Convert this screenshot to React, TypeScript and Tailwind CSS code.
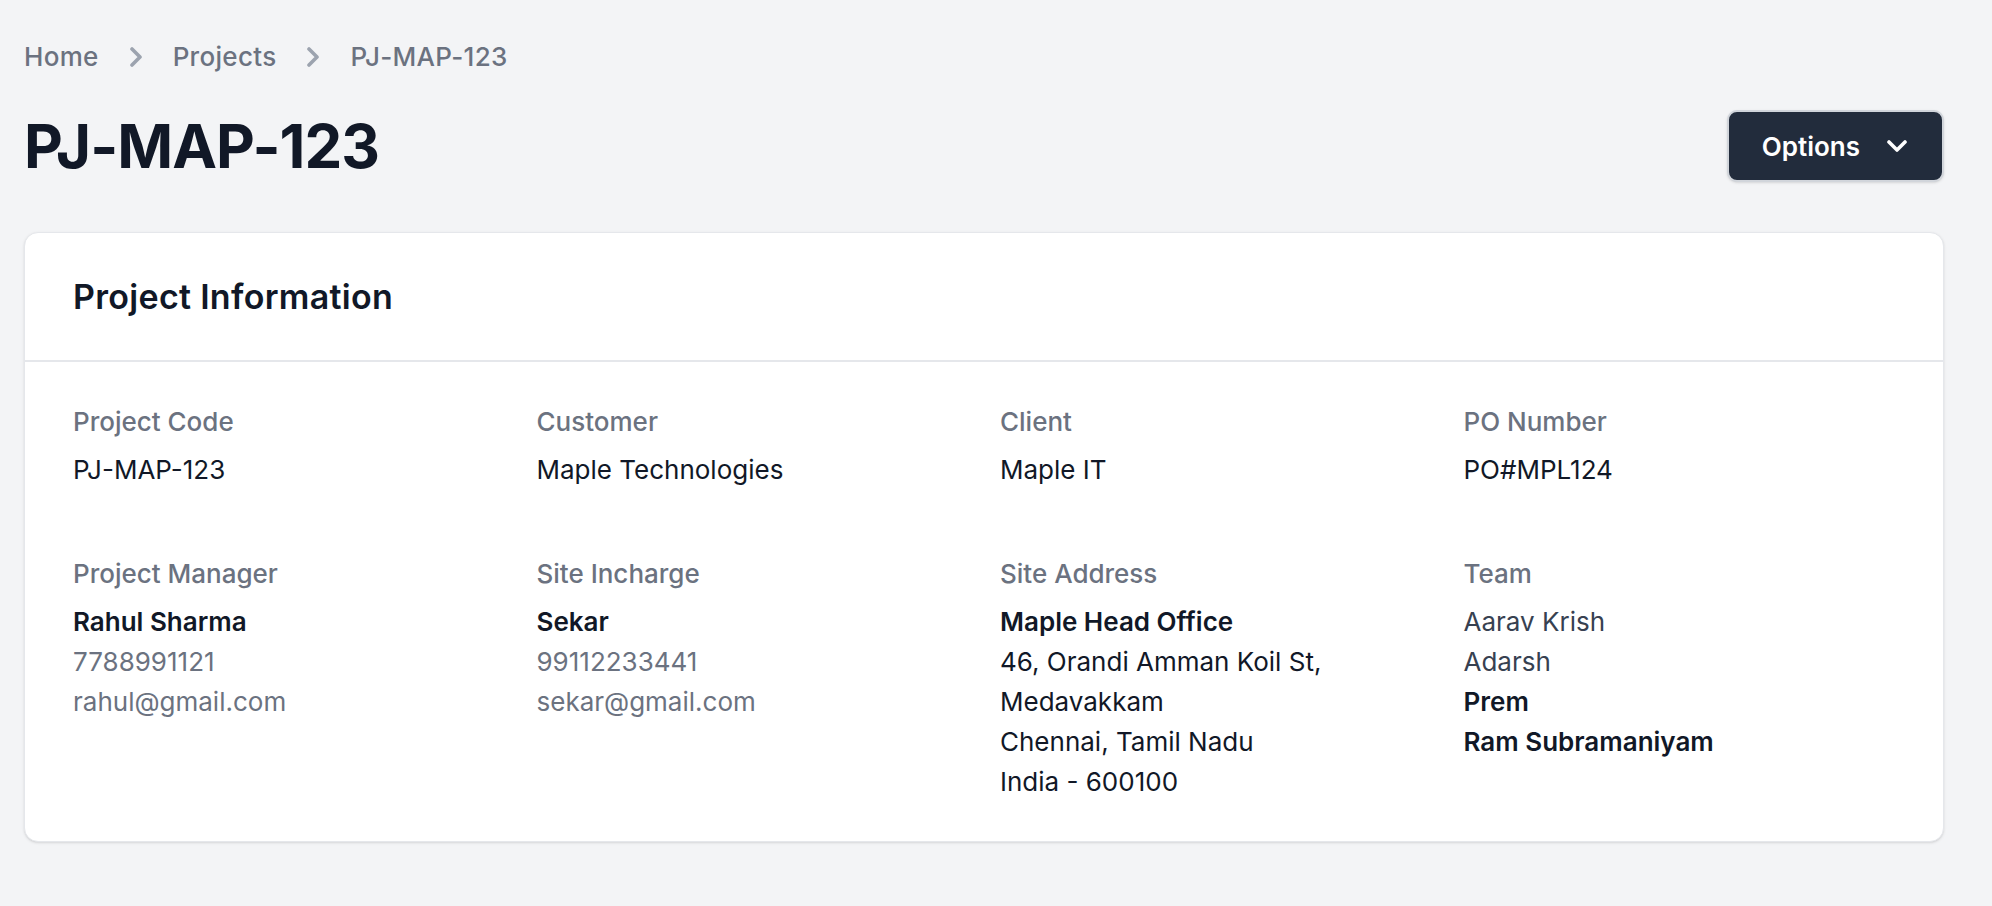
const font = { fontFamily: "Inter, 'Noto Sans', sans-serif" };

type Field = {
  label: string;
  lines: { text: string; tone: "strong" | "body" | "muted" | "soft" }[];
};

const fields: Field[] = [
  { label: "Project Code", lines: [{ text: "PJ-MAP-123", tone: "body" }] },
  { label: "Customer", lines: [{ text: "Maple Technologies", tone: "body" }] },
  { label: "Client", lines: [{ text: "Maple IT", tone: "body" }] },
  { label: "PO Number", lines: [{ text: "PO#MPL124", tone: "body" }] },
  {
    label: "Project Manager",
    lines: [
      { text: "Rahul Sharma", tone: "strong" },
      { text: "7788991121", tone: "muted" },
      { text: "rahul@gmail.com", tone: "muted" },
    ],
  },
  {
    label: "Site Incharge",
    lines: [
      { text: "Sekar", tone: "strong" },
      { text: "99112233441", tone: "muted" },
      { text: "sekar@gmail.com", tone: "muted" },
    ],
  },
  {
    label: "Site Address",
    lines: [
      { text: "Maple Head Office", tone: "strong" },
      { text: "46, Orandi Amman Koil St,", tone: "body" },
      { text: "Medavakkam", tone: "body" },
      { text: "Chennai, Tamil Nadu", tone: "body" },
      { text: "India - 600100", tone: "body" },
    ],
  },
  {
    label: "Team",
    lines: [
      { text: "Aarav Krish", tone: "soft" },
      { text: "Adarsh", tone: "soft" },
      { text: "Prem", tone: "strong" },
      { text: "Ram Subramaniyam", tone: "strong" },
    ],
  },
];

const toneClass = {
  strong: "font-semibold text-[#111827]",
  body: "text-[#111827]",
  muted: "text-[#6b7280]",
  soft: "text-[#374151]",
};

// chevron used between breadcrumb items
const Crumb = () => (
  <svg width="12" height="20" viewBox="0 0 12 20" fill="none" className="text-[#9ca3af]">
    <polyline
      points="2,2 10,10 2,18"
      stroke="currentColor"
      strokeWidth="3.6"
      strokeLinecap="round"
      strokeLinejoin="round"
    />
  </svg>
);

export default function App() {
  return (
    <div
      style={font}
      className="min-h-screen bg-[#f3f4f6] pl-[24px] pr-[48px] pt-[37px]"
    >
      {/* breadcrumb */}
      <nav className="flex items-center gap-[31px] text-[26px] font-medium leading-[40px] tracking-[0.3px] text-[#6b7280]">
        <span>Home</span>
        <Crumb />
        <span>Projects</span>
        <Crumb />
        <span>PJ-MAP-123</span>
      </nav>

      {/* title row */}
      <div className="mt-[33px] flex items-center justify-between">
        <h1 className="text-[60px] font-bold leading-[60px] tracking-[-1px] text-[#111827]">
          PJ-MAP-123
        </h1>
        <button className="flex h-[72px] items-center gap-[27px] rounded-[10px] border-2 border-[#d1d5db] bg-[#222c3c] pl-[33px] pr-[35px] text-[26px] font-semibold text-white shadow-sm">
          Options
          <svg width="20" height="12" viewBox="0 0 20 12" fill="none">
            <polyline
              points="2,2 10,10 18,2"
              stroke="currentColor"
              strokeWidth="3.6"
              strokeLinecap="round"
              strokeLinejoin="round"
            />
          </svg>
        </button>
      </div>

      {/* card */}
      <div className="mt-[50px] rounded-[14px] border border-[#e5e7eb] bg-white shadow-sm">
        <div className="flex h-[129px] items-center border-b-2 border-[#e5e7eb] px-[48px]">
          <h2 className="text-[34px] font-semibold tracking-[0.3px] text-[#111827]">
            Project Information
          </h2>
        </div>
        <div className="grid grid-cols-4 gap-x-[32px] gap-y-[64px] px-[48px] pb-[39px] pt-[40px]">
          {fields.map((f) => (
            <div key={f.label}>
              <div className="text-[26px] font-medium leading-[40px] text-[#6b7280]">
                {f.label}
              </div>
              <div className="mt-[8px] text-[26px] leading-[40px]">
                {f.lines.map((l) => (
                  <div key={l.text} className={toneClass[l.tone]}>
                    {l.text}
                  </div>
                ))}
              </div>
            </div>
          ))}
        </div>
      </div>
    </div>
  );
}
